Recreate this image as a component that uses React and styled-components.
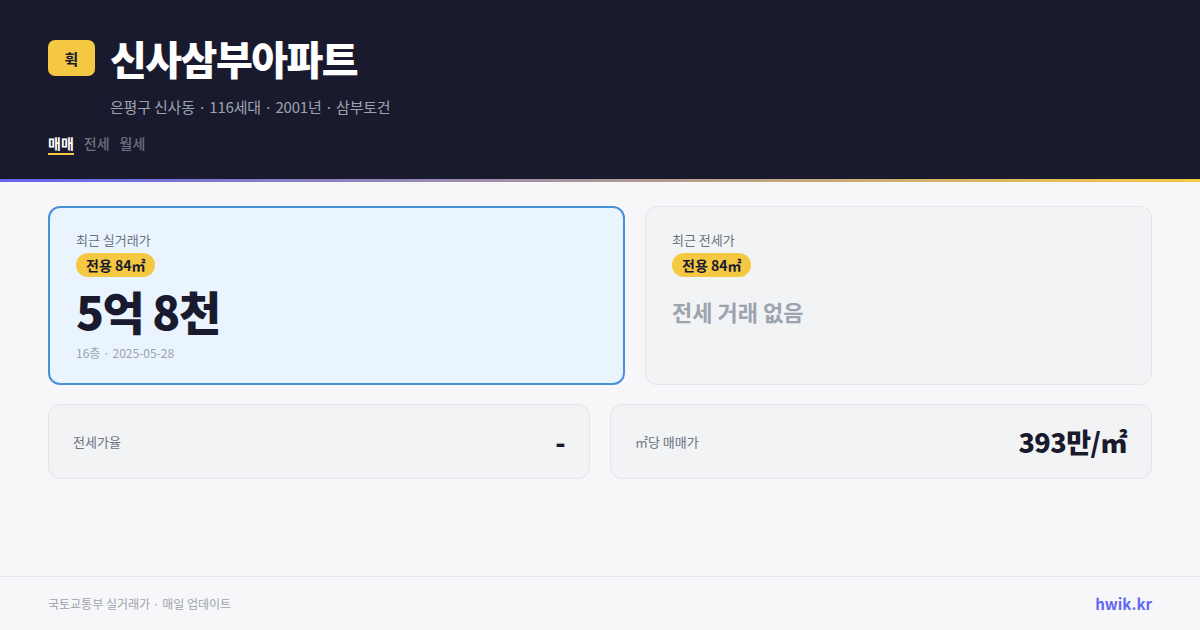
import React from "react";
import styled, { createGlobalStyle } from "styled-components";

const Global = createGlobalStyle`
  html, body { margin: 0; padding: 0; }
  body {
    width: 1200px; height: 630px; overflow: hidden;
    background: #f7f7f9;
    font-family: "Noto Sans CJK KR", "Noto Sans", sans-serif;
  }
  * { box-sizing: border-box; }
`;

const Page = styled.div`
  width: 1200px;
  height: 630px;
  display: flex;
  flex-direction: column;
  background: #f7f7f9;
`;

const Header = styled.header`
  background: #1a1a2e;
  height: 182px;
  padding: 35px 48px 0;
  display: flex;
  flex-direction: column;
  border-bottom: 3px solid transparent;
  border-image: linear-gradient(90deg, #6366f1, #f5c842) 1;
`;

const TitleRow = styled.div`
  display: flex;
  align-items: center;
  gap: 15px;
  height: 46px;
`;

const Logo = styled.div`
  width: 47px;
  height: 36px;
  border-radius: 7px;
  background: #f5c842;
  color: #1a1a2e;
  font-size: 15px;
  font-weight: 700;
  display: flex;
  align-items: center;
  justify-content: center;
`;

const Title = styled.h1`
  margin: 0;
  color: #ffffff;
  font-size: 40px;
  font-weight: 900;
  letter-spacing: -1.5px;
  line-height: 46px;
`;

const Sub = styled.div`
  margin: 16px 0 0 62px;
  color: #9ca3af;
  font-size: 15px;
  line-height: 20px;
  letter-spacing: -0.2px;
`;

const Tabs = styled.div`
  display: flex;
  gap: 10px;
  margin-top: 16px;
`;

const Tab = styled.div`
  font-size: 14px;
  line-height: 20px;
  font-weight: ${(p) => (p.$active ? 700 : 500)};
  color: ${(p) => (p.$active ? "#ffffff" : "#6b7280")};
  border-bottom: 2px solid ${(p) => (p.$active ? "#f5c842" : "transparent")};
`;

const Main = styled.main`
  flex: 1;
  padding: 24px 48px 0;
  display: flex;
  flex-direction: column;
  gap: 19px;
`;

const TopRow = styled.div`
  display: grid;
  grid-template-columns: 577px 1fr;
  gap: 20px;
`;

const PriceCard = styled.div`
  height: 179px;
  border-radius: 12px;
  padding: ${(p) => (p.$primary ? "23px 26px" : "24px 26px")};
  background: ${(p) => (p.$primary ? "#eaf4ff" : "#f2f3f5")};
  border: ${(p) => (p.$primary ? "2px solid #4a90d9" : "1px solid #e3e5e9")};
  display: flex;
  flex-direction: column;
  align-items: flex-start;
`;

const Label = styled.div`
  color: #6b7280;
  font-size: 13px;
  line-height: 18px;
`;

const Badge = styled.span`
  margin-top: 4px;
  background: #f5c842;
  color: #1a1a2e;
  font-size: 14px;
  font-weight: 700;
  line-height: 24px;
  height: 24px;
  padding: 0 10px;
  border-radius: 12px;
`;

const Price = styled.div`
  margin-top: 7px;
  color: #1a1a2e;
  font-size: 46px;
  font-weight: 900;
  line-height: 52px;
  letter-spacing: -1.5px;
`;

const Meta = styled.div`
  margin-top: 9px;
  color: #9ca3af;
  font-size: 12px;
  line-height: 16px;
`;

const Empty = styled.div`
  margin-top: 18px;
  color: #9ca3af;
  font-size: 22px;
  font-weight: 700;
  line-height: 32px;
`;

const BottomRow = styled.div`
  display: grid;
  grid-template-columns: 1fr 1fr;
  gap: 20px;
`;

const StatCard = styled.div`
  height: 75px;
  border-radius: 12px;
  background: #f2f3f5;
  border: 1px solid #e3e5e9;
  padding: 0 24px;
  display: flex;
  align-items: center;
  justify-content: space-between;
`;

const StatLabel = styled.div`
  color: #6b7280;
  font-size: 13px;
`;

const StatValue = styled.div`
  color: #1a1a2e;
  font-size: 27px;
  font-weight: 800;
  letter-spacing: -0.5px;
`;

const Footer = styled.footer`
  height: 54px;
  border-top: 1px solid #e5e7eb;
  padding: 0 48px;
  display: flex;
  align-items: center;
  justify-content: space-between;
`;

const FootText = styled.div`
  color: #9ca3af;
  font-size: 12px;
`;

const Brand = styled.div`
  color: #6366f1;
  font-size: 15px;
  font-weight: 700;
`;

export default function App() {
  return (
    <Page>
      <Global />
      <Header>
        <TitleRow>
          <Logo>휙</Logo>
          <Title>신사삼부아파트</Title>
        </TitleRow>
        <Sub>은평구 신사동 · 116세대 · 2001년 · 삼부토건</Sub>
        <Tabs>
          <Tab $active>매매</Tab>
          <Tab>전세</Tab>
          <Tab>월세</Tab>
        </Tabs>
      </Header>
      <Main>
        <TopRow>
          <PriceCard $primary>
            <Label>최근 실거래가</Label>
            <Badge>전용 84㎡</Badge>
            <Price>5억 8천</Price>
            <Meta>16층 · 2025-05-28</Meta>
          </PriceCard>
          <PriceCard>
            <Label>최근 전세가</Label>
            <Badge>전용 84㎡</Badge>
            <Empty>전세 거래 없음</Empty>
          </PriceCard>
        </TopRow>
        <BottomRow>
          <StatCard>
            <StatLabel>전세가율</StatLabel>
            <StatValue>-</StatValue>
          </StatCard>
          <StatCard>
            <StatLabel>㎡당 매매가</StatLabel>
            <StatValue>393만/㎡</StatValue>
          </StatCard>
        </BottomRow>
      </Main>
      <Footer>
        <FootText>국토교통부 실거래가 · 매일 업데이트</FootText>
        <Brand>hwik.kr</Brand>
      </Footer>
    </Page>
  );
}
